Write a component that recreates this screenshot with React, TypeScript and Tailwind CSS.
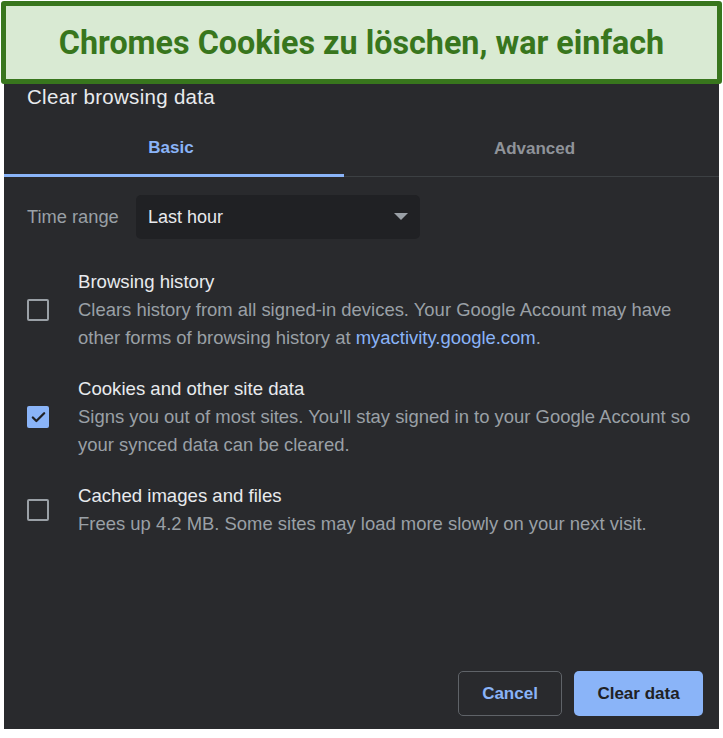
import { Check } from "lucide-react";

type ItemType = {
  title: string;
  checked: boolean;
  lines: React.ReactNode[];
};

const items: ItemType[] = [
  {
    title: "Browsing history",
    checked: false,
    lines: [
      "Clears history from all signed-in devices. Your Google Account may have",
      <>
        other forms of browsing history at{" "}
        <span className="text-[#8ab4f8]">myactivity.google.com</span>.
      </>,
    ],
  },
  {
    title: "Cookies and other site data",
    checked: true,
    lines: [
      "Signs you out of most sites. You'll stay signed in to your Google Account so",
      "your synced data can be cleared.",
    ],
  },
  {
    title: "Cached images and files",
    checked: false,
    lines: ["Frees up 4.2 MB. Some sites may load more slowly on your next visit."],
  },
];

const App = () => {
  return (
    <div className="w-[723px] h-[738px] bg-white flex flex-col font-['Liberation_Sans',sans-serif]">
      <div className="mx-[1px] mt-[1px] h-[83px] shrink-0 rounded-[3px] border-[5px] border-[#38761d] bg-[#d9ead3] flex items-center justify-center pt-[2px]">
        <h1 className="font-['Roboto',sans-serif] text-[32.3px] font-bold text-[#38761d]">
          Chromes Cookies zu löschen, war einfach
        </h1>
      </div>

      <div className="mx-[4px] w-[715px] h-[645px] bg-[#292a2d] flex flex-col">
        <div className="h-[26px] flex items-center pl-[23px]">
          <h2 className="text-[20.5px] text-[#e8eaed] tracking-[0.3px]">Clear browsing data</h2>
        </div>

        <div className="flex h-[67px]">
          <div className="w-[340px] border-b-[3px] border-[#8ab4f8] flex items-center justify-center pt-[12px] pr-[6px]">
            <span className="text-[17px] font-bold text-[#8ab4f8]">Basic</span>
          </div>
          <div className="flex-1 border-b border-[#3c4043] flex items-center justify-center pt-[11px] pl-[6px]">
            <span className="text-[17px] font-bold text-[#8f9399]">Advanced</span>
          </div>
        </div>

        <div className="mt-[18px] flex items-center pl-[23px]">
          <span className="w-[109px] text-[18.3px] text-[#9aa0a6]">Time range</span>
          <div className="w-[284px] h-[44px] rounded-[5px] bg-[#202124] flex items-center justify-between pl-[12px] pr-[12px]">
            <span className="text-[18px] text-[#e8eaed]">Last hour</span>
            <svg width="14" height="8" viewBox="0 0 14 8">
              <path d="M0 0 L14 0 L7 7 Z" fill="#9aa0a6" />
            </svg>
          </div>
        </div>

        <div className="mt-[29px] flex flex-col gap-[23px]">
          {items.map((item) => (
            <div key={item.title} className="flex items-center pl-[23px]">
              <div className="w-[51px] shrink-0">
                {item.checked ? (
                  <div className="w-[22px] h-[22px] rounded-[2px] bg-[#8ab4f8] flex items-center justify-center">
                    <Check size={17} strokeWidth={3.2} className="text-[#202124]" />
                  </div>
                ) : (
                  <div className="w-[22px] h-[22px] rounded-[2px] border-2 border-[#9aa0a6]" />
                )}
              </div>
              <div className="flex flex-col">
                <span className="text-[18.6px] leading-[28px] text-[#e8eaed]">{item.title}</span>
                {item.lines.map((line, i) => (
                  <span key={i} className="text-[18.45px] leading-[28px] text-[#9aa0a6]">
                    {line}
                  </span>
                ))}
              </div>
            </div>
          ))}
        </div>

        <div className="mt-auto mb-[13px] mr-[16px] flex justify-end gap-[12px]">
          <button className="w-[104px] h-[45px] rounded-[5px] border border-[#5f6368] text-[17px] font-bold text-[#8ab4f8]">
            Cancel
          </button>
          <button className="w-[129px] h-[45px] rounded-[5px] bg-[#8ab4f8] text-[17px] font-bold text-[#202124]">
            Clear data
          </button>
        </div>
      </div>
    </div>
  );
};

export default App;
